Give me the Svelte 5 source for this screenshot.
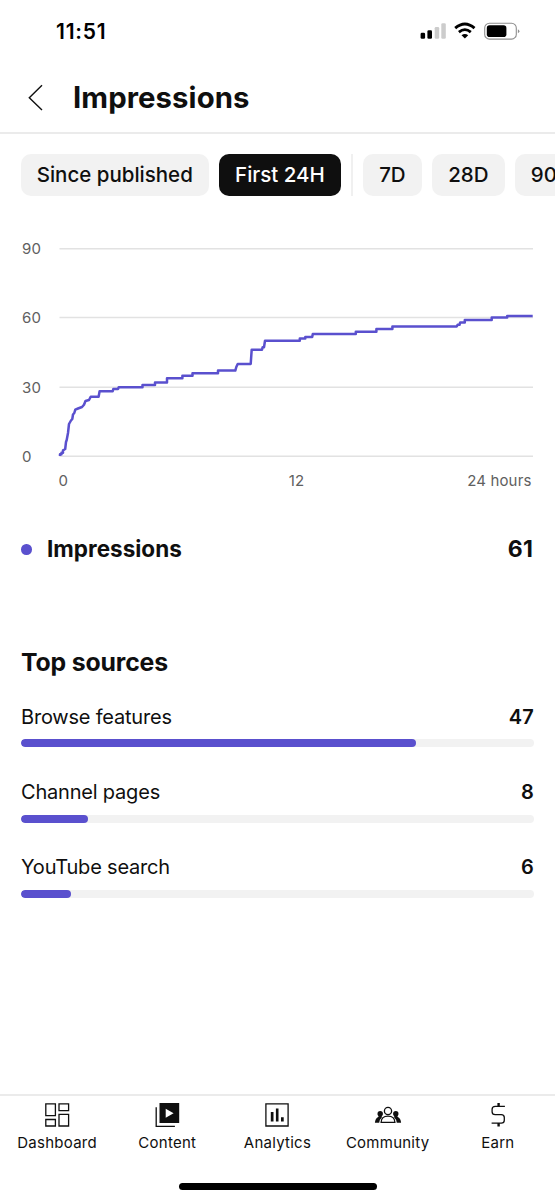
<script>
  const ranges = [
    { label: 'Since published', width: 187.5 },
    { label: 'First 24H', width: 122, active: true },
    { label: '7D', width: 58.5, divided: true },
    { label: '28D', width: 72.5 },
    { label: '90D', width: 72.5 }
  ];
  const sources = [
    { name: 'Browse features', value: 47 },
    { name: 'Channel pages', value: 8 },
    { name: 'YouTube search', value: 6 }
  ];
  const total = 61;
  const grid = [
    { value: 90, y: 18.7 },
    { value: 60, y: 87.6 },
    { value: 30, y: 157.3 },
    { value: 0, y: 226.3 }
  ];
  const line =
    'M60 226V224.3H61.5V222.7H63V220.3L65.2 219L66 212L66.7 210L68 203L69 194L71 190.5L72.3 189L73 184.5L74.3 183L75.3 179.7L78 178.5L82 177L84 174.7L85.5 171L89 170L90.7 166.7H98.6L99.6 161.3H112.7L113.3 159H118L118.7 157.3H142.5V155H155V152.4H167V148.3H182.4V145.8H192.5V143.3H218V140.6H235.3L236.3 137L237.7 134H250.7L251.7 119.7H262L262.6 117.3H264L265 110.7H299.8V108.4H305.3V107H312.2L312.8 104.1H355.8V101.8H376.4V99.1H392.4V96.5H456.7L457.6 94.8H459.5L460.2 92.4H464.8V90.1H491.7V87.5H507.2V86H532.7';
</script>

<div class="screen">
  <div class="status">
    <span class="time">11:51</span>
    <svg width="102" height="20" viewBox="0 0 102 20">
      <rect x="2.6" y="12.8" width="4.5" height="6" rx="1.3" />
      <rect x="9.4" y="10.2" width="4.6" height="8.6" rx="1.3" />
      <rect x="16.7" y="7" width="4.5" height="11.8" rx="1.3" fill="#ccc" />
      <rect x="23.3" y="3.2" width="4.5" height="15.6" rx="1.3" fill="#ccc" />
      <path d="M37.2 8.1Q46.9-.2 56.5 8.1" fill="none" stroke="#000" stroke-width="2.9" />
      <path d="M40.9 12.1Q46.9 7.1 52.8 12.1" fill="none" stroke="#000" stroke-width="2.8" />
      <path d="M43.5 15.3Q46.9 12.5 50.2 15.3L46.9 18.6Z" />
      <rect x="66.7" y="3.3" width="31.6" height="15.8" rx="4.7" fill="none" stroke="#8f8f8f" stroke-width="1.1" />
      <rect x="68.8" y="5.3" width="19.6" height="11.8" rx="2.8" />
      <path d="M99.9 9.2Q103 11.2 99.9 13.2Z" fill="#8f8f8f" />
    </svg>
  </div>

  <header>
    <svg width="16" height="28" viewBox="0 0 16 28">
      <path d="M14 1.2L1.3 13.7L14 26" fill="none" stroke="#0f0f0f" stroke-width="1.4" />
    </svg>
    <h1>Impressions</h1>
  </header>

  <div class="chips">
    {#each ranges as range}
      {#if range.divided}<i class="divider"></i>{/if}
      <button class:active={range.active} style:width="{range.width}px">{range.label}</button>
    {/each}
  </div>

  <svg class="chart" width="555" height="270" viewBox="0 0 555 270">
    {#each grid as row}
      <path d="M59.5 {row.y}H533" stroke="#e2e2e2" stroke-width="1.5" />
      <text x="22" y={row.y + 5.6}>{row.value}</text>
    {/each}
    <path d={line} fill="none" stroke="#5a50ce" stroke-width="2.5" stroke-linejoin="round" />
    <text x="58.5" y="256">0</text>
    <text x="296.5" y="256" text-anchor="middle">12</text>
    <text x="531.5" y="256" text-anchor="end">24 hours</text>
  </svg>

  <div class="summary">
    <i class="dot"></i>
    <span>Impressions</span>
    <b>{total}</b>
  </div>

  <section>
    <h2>Top sources</h2>
    {#each sources as source}
      <div class="source">
        <div class="row"><span>{source.name}</span><b>{source.value}</b></div>
        <div class="track"><div class="fill" style:width="{(source.value / total) * 100}%"></div></div>
      </div>
    {/each}
  </section>

  <nav>
    <a href="#dashboard">
      <svg width="28" height="28" viewBox="0 0 28 28" fill="none" stroke="#0f0f0f" stroke-width="1.3">
        <path d="M2.8 2.8h9.6v11.8H2.8zM16 2.8h9.6v6.8H16zM2.8 18.5h9.6v6.5H2.8zM16 13.3h9.6V25H16z" />
      </svg>
      <span>Dashboard</span>
    </a>
    <a href="#content">
      <svg width="28" height="28" viewBox="0 0 28 28">
        <path d="M6.5 2.1h19.7v19.8H6.5zM12.7 7.8v9l7.9-4.5z" fill="#0f0f0f" fill-rule="evenodd" />
        <path d="M3.2 6.2v19.2h18.7" fill="none" stroke="#0f0f0f" stroke-width="1.3" />
      </svg>
      <span>Content</span>
    </a>
    <a href="#analytics">
      <svg width="28" height="28" viewBox="0 0 28 28">
        <path d="M2.9 2.8h22.2V25H2.9z" fill="none" stroke="#0f0f0f" stroke-width="1.3" />
        <path d="M7.8 11h2.7v9.4H7.8zM12.9 7.5h2.6v12.9h-2.6zM18 16.3h2.7v4.1H18z" fill="#0f0f0f" />
      </svg>
      <span>Analytics</span>
    </a>
    <a href="#community">
      <svg width="28" height="28" viewBox="0 0 28 28" fill="#0f0f0f">
        <circle cx="6.2" cy="12.8" r="2.7" />
        <circle cx="21.8" cy="12.8" r="2.7" />
        <path d="M4.5 14.2h3.3v2.3Q5.5 18.5 5.2 21.8H.9Q1.2 17.5 4.5 15.8zM23.5 14.2h-3.3v2.3q2.3 2 2.6 5.3h4.3q-.3-4.3-3.6-6z" />
        <g fill="none" stroke="#0f0f0f" stroke-width="1.3">
          <circle cx="14" cy="10" r="3.6" />
          <path d="M7.1 21.3Q7.4 15.2 14 15.2T20.9 21.3Z" />
        </g>
      </svg>
      <span>Community</span>
    </a>
    <a href="#earn">
      <svg width="28" height="28" viewBox="0 0 28 28" fill="none" stroke="#0f0f0f">
        <path d="M20.9 5.4H11.2Q8.1 5.4 8.1 8.3V10.7Q8.1 13.6 11.2 13.6H17.2Q20.3 13.6 20.3 16.5V19.3Q20.3 22.2 17.2 22.2H7.6" stroke-width="1.3" />
        <path d="M14.6 2.1V5.5M14.6 22V25.6" stroke-width="2.4" />
      </svg>
      <span>Earn</span>
    </a>
  </nav>
  <div class="home"></div>
</div>

<style>
  :global(body) { margin: 0; background: #fff; }
  .screen { width: 555px; height: 1200px; overflow: hidden; display: flex; flex-direction: column; background: #fff; color: #0f0f0f; font-family: Inter, sans-serif; }
  .screen > * { flex-shrink: 0; box-sizing: border-box; }
  .status { height: 63px; padding: 20px 35px 0 56px; display: flex; justify-content: space-between; align-items: flex-start; color: #000; }
  .time { font-size: 21px; line-height: 24px; font-weight: 600; letter-spacing: .8px; }
  header { height: 71px; padding: 0 28px; display: flex; align-items: center; gap: 29px; border-bottom: 2px solid #ebebeb; }
  h1 { margin: 1px 0 0; font-size: 29.3px; line-height: 36px; font-weight: 700; letter-spacing: .1px; }
  .chips { height: 96px; padding: 20px 0 0 21px; display: flex; align-items: flex-start; gap: 10.4px; }
  button { flex: none; height: 41.5px; padding: 0; border: 0; border-radius: 10px; background: #f2f2f2; color: #0f0f0f; font: 500 20.5px/41.5px Inter, sans-serif; white-space: nowrap; }
  button.active { background: #0f0f0f; color: #fff; }
  .divider { flex: none; width: 1.5px; height: 42px; background: #f0f0f0; }
  .chart { display: block; }
  .chart text { font-size: 15px; fill: #606060; letter-spacing: .15px; }
  .summary { height: 98px; padding: 34px 21.5px 0 21px; display: flex; align-items: flex-start; font-size: 22.5px; line-height: 30px; font-weight: 700; letter-spacing: 0; }
  .dot { width: 10.5px; height: 10.5px; margin: 10px 15.5px 0 0; border-radius: 50%; background: #5a50ce; }
  .summary b { margin-left: auto; font-size: 23px; font-weight: 700; letter-spacing: .5px; }
  section { height: 496px; padding: 48px 21px 0; }
  h2 { margin: 0 0 25px; font-size: 24.8px; line-height: 32px; font-weight: 700; letter-spacing: -.15px; }
  .source { height: 75.2px; }
  .row { display: flex; justify-content: space-between; font-size: 20px; line-height: 28px; letter-spacing: -.2px; }
  .row b { font-weight: 600; letter-spacing: .2px; }
  .track { height: 8px; margin-top: 8.4px; border-radius: 4px; background: #f2f2f2; overflow: hidden; }
  .fill { height: 100%; border-radius: 4px; background: #5a50ce; }
  nav { height: 89px; padding: 4.7px 2px 0; display: grid; grid-template-columns: repeat(5, 110.2px); border-top: 2px solid #ebebeb; }
  a { display: flex; flex-direction: column; align-items: center; color: #0f0f0f; text-decoration: none; font-size: 15px; line-height: 22px; letter-spacing: .25px; }
  a span { margin-top: 3.1px; }
  .home { width: 198px; height: 6.5px; margin: 0 auto; border-radius: 4px; background: #000; }
</style>
